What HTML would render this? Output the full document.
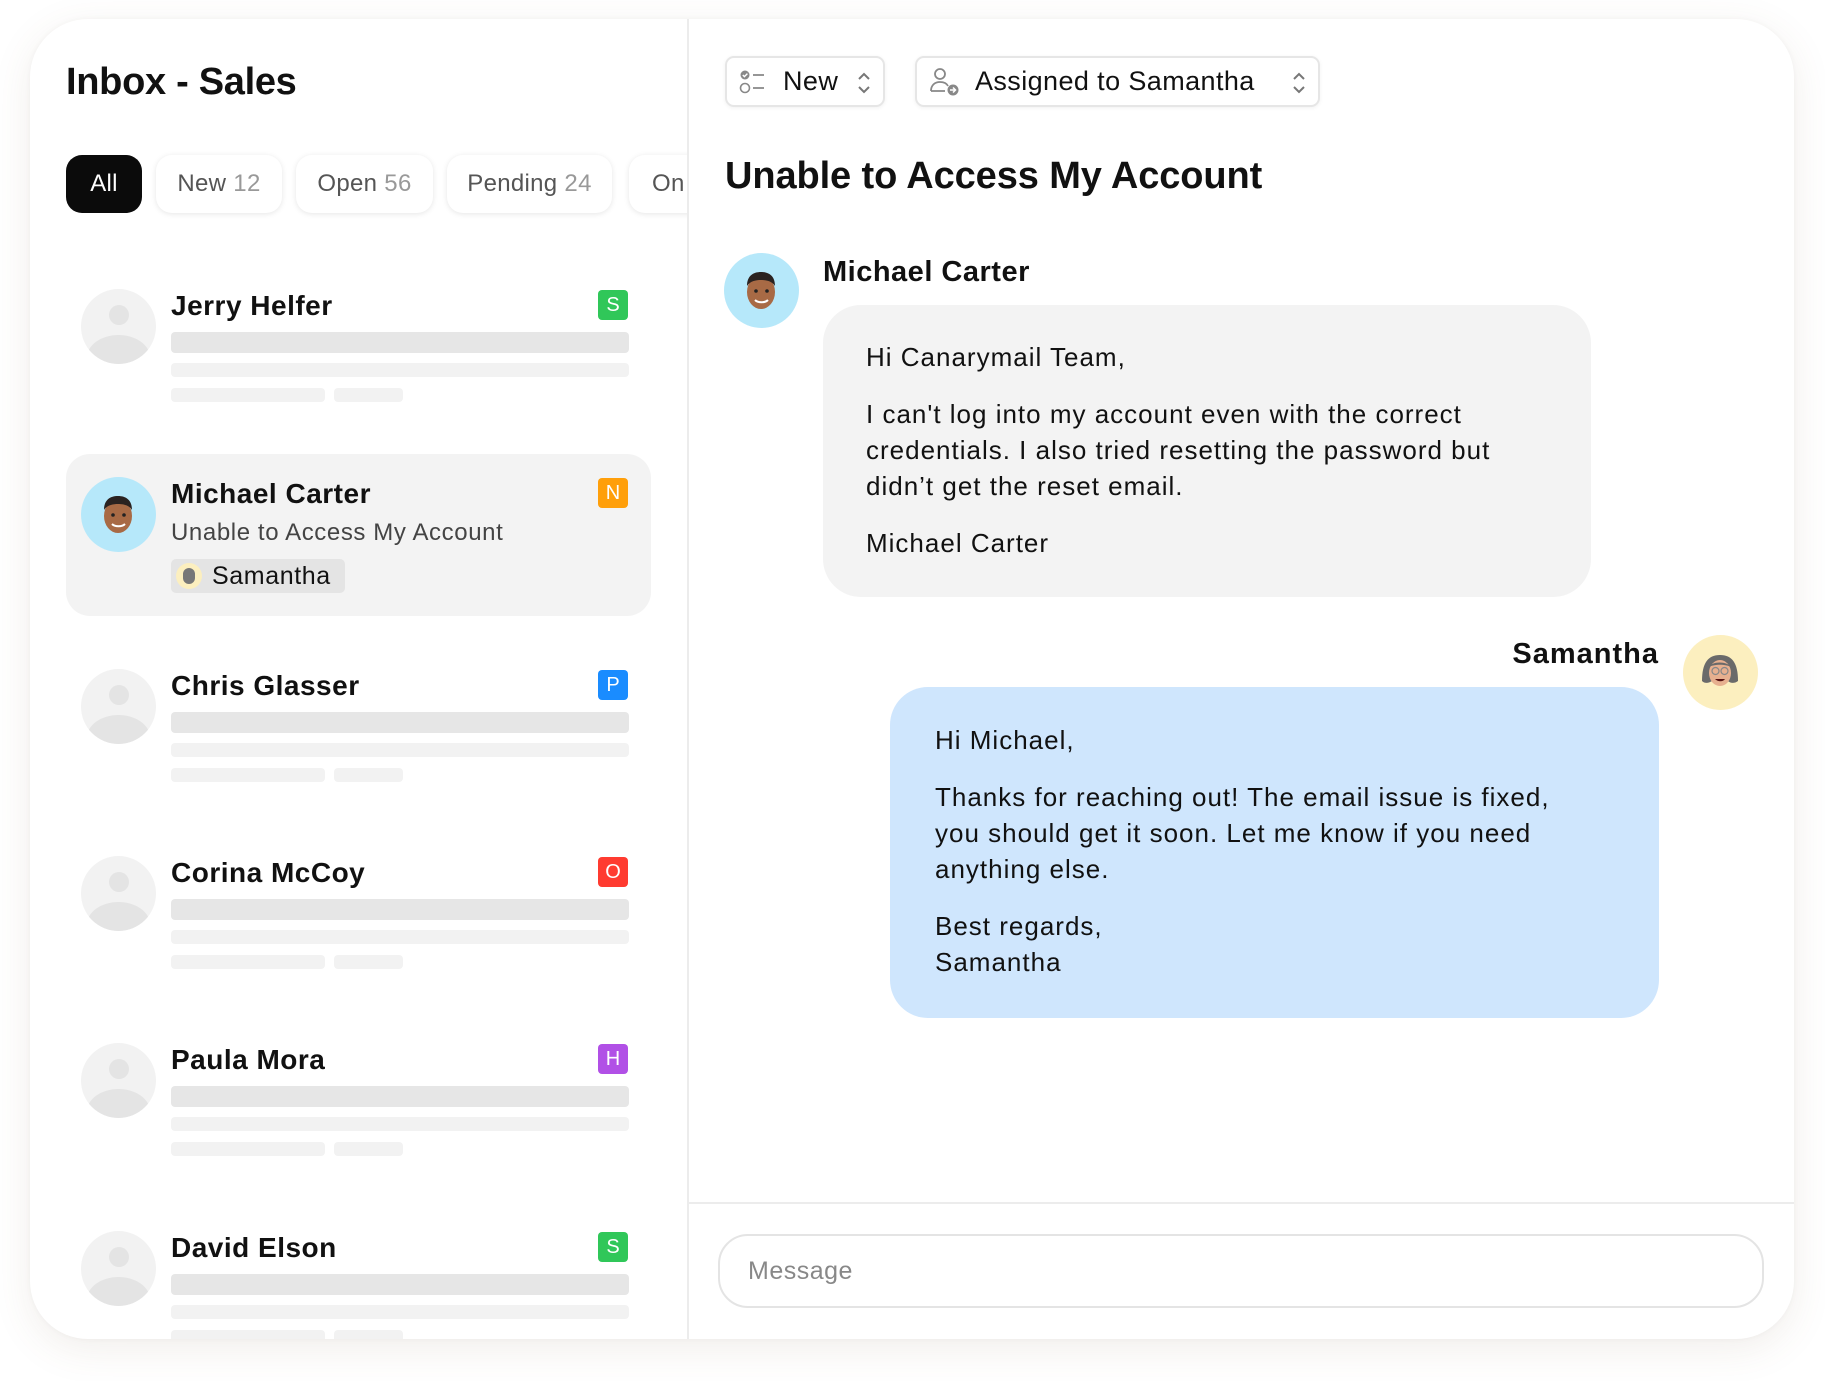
<!DOCTYPE html>
<html><head><meta charset="utf-8"><style>
*{box-sizing:border-box;margin:0;padding:0}
body{width:1825px;height:1381px;background:#fff;font-family:"Liberation Sans",sans-serif;color:#111;position:relative;overflow:hidden}
.card{position:absolute;left:30px;top:19px;width:1764px;height:1320px;border-radius:58px;background:#fff;box-shadow:0 10px 40px rgba(120,90,60,.10),0 0 6px rgba(0,0,0,.04);overflow:hidden}
.abs{position:absolute}
.left{position:absolute;left:0;top:0;width:657px;height:1320px;overflow:hidden}
.title{left:36px;top:42px;font-size:38px;font-weight:bold;letter-spacing:-.3px}
.tab{position:absolute;top:136px;height:58px;border-radius:16px;background:#fff;box-shadow:0 1px 6px rgba(0,0,0,.10);font-size:24px;color:#555;line-height:58px;text-align:center;letter-spacing:.3px}
.tab span{color:#999}
.divider{left:657px;top:0;width:2px;height:1320px;background:#ececec}
.av{position:absolute;width:75px;height:75px;border-radius:50%;background:#f2f2f2;overflow:hidden}
.av .h{position:absolute;left:28px;top:16px;width:20px;height:20px;border-radius:50%;background:#e4e4e4}
.av .b{position:absolute;left:6px;top:46px;width:63px;height:45px;border-radius:50%;background:#e4e4e4}
.name{position:absolute;font-size:28px;font-weight:bold;letter-spacing:.5px}
.badge{position:absolute;width:30px;height:30px;border-radius:4px;color:#fff;font-size:20px;text-align:center;line-height:30px}
.sk{position:absolute;border-radius:4px}
.dd{position:absolute;top:37px;height:51px;border:2px solid #e6e6e6;border-radius:9px;box-shadow:0 1px 4px rgba(0,0,0,.06);font-size:27px;line-height:47px;letter-spacing:.4px}
.bub{position:absolute;border-radius:38px;font-size:26px;line-height:36px;color:#111;letter-spacing:1px}
.bub p{margin-bottom:21px}
</style></head><body>
<div class="card">
<div class="left">
<div class="abs title">Inbox - Sales</div>
<div class="tab" style="left:36px;width:76px;background:#0b0b0b;color:#fff;box-shadow:none">All</div>
<div class="tab" style="left:126px;width:126px">New <span>12</span></div>
<div class="tab" style="left:266px;width:137px">Open <span>56</span></div>
<div class="tab" style="left:417px;width:165px">Pending <span>24</span></div>
<div class="tab" style="left:599px;width:100px;text-align:left;padding-left:23px">On</div>
<div class="abs" style="left:36px;top:435px;width:585px;height:162px;border-radius:24px;background:#f3f3f3"></div>
<div id="list"></div>
</div>
<div class="abs divider"></div>

<div class="dd" style="left:695px;width:160px">
<svg class="abs" style="left:12px;top:11px" width="30" height="26" viewBox="0 0 30 26"><circle cx="6" cy="6" r="4.5" fill="#888"/><path d="M3.8 6l1.6 1.6 3-3" stroke="#fff" stroke-width="1.4" fill="none"/><circle cx="6" cy="19" r="4.5" fill="none" stroke="#888" stroke-width="1.6"/><path d="M14 6h11M14 19h11" stroke="#888" stroke-width="1.8"/></svg>
<span class="abs" style="left:56px;top:0">New</span>
<svg class="abs" style="left:130px;top:12px" width="14" height="26" viewBox="0 0 14 26"><path d="M2 9l5-5 5 5M2 17l5 5 5-5" stroke="#777" stroke-width="2" fill="none"/></svg>
</div>
<div class="dd" style="left:885px;width:405px">
<svg class="abs" style="left:12px;top:9px" width="32" height="30" viewBox="0 0 32 30"><circle cx="11" cy="7" r="5" fill="none" stroke="#888" stroke-width="1.8"/><path d="M2 24c0-6 4-9 9-9s7 2 8 4M2 24h14" stroke="#888" stroke-width="1.8" fill="none"/><circle cx="24" cy="23" r="5.5" fill="#888"/><path d="M21 23h5M24 20.5l2.5 2.5-2.5 2.5" stroke="#fff" stroke-width="1.5" fill="none"/></svg>
<span class="abs" style="left:58px;top:0">Assigned to Samantha</span>
<svg class="abs" style="left:375px;top:12px" width="14" height="26" viewBox="0 0 14 26"><path d="M2 9l5-5 5 5M2 17l5 5 5-5" stroke="#777" stroke-width="2" fill="none"/></svg>
</div>

<div class="abs" style="left:695px;top:136px;font-size:38px;font-weight:bold;letter-spacing:-.1px">Unable to Access My Account</div>

<div class="abs" style="left:694px;top:234px;width:75px;height:75px;border-radius:50%;background:#b6e8fa">
<svg width="75" height="75" viewBox="0 0 75 75"><ellipse cx="37" cy="39" rx="14" ry="17" fill="#a86a45"/><path d="M23 33c0-10 6-14 14-14s14 4 14 14c-3-5-9-6-14-6s-11 1-14 6z" fill="#2a2220"/><circle cx="32" cy="38" r="1.8" fill="#222"/><circle cx="43" cy="38" r="1.8" fill="#222"/><path d="M31 47c3 3 10 3 13 0" stroke="#fff" stroke-width="2" fill="none"/></svg>
</div>
<div class="name" style="left:793px;top:237px;font-size:29px">Michael Carter</div>
<div class="bub" style="left:793px;top:286px;width:768px;height:292px;background:#f3f3f3;padding:34px 70px 34px 43px">
<p>Hi Canarymail Team,</p>
<p>I can't log into my account even with the correct credentials. I also tried resetting the password but didn’t get the reset email.</p>
<p>Michael Carter</p>
</div>

<div class="name" style="right:135px;top:619px;font-size:29px;letter-spacing:1px">Samantha</div>
<div class="abs" style="left:1653px;top:616px;width:75px;height:75px;border-radius:50%;background:#fcefbf">
<svg width="75" height="75" viewBox="0 0 75 75"><path d="M19 46c0-18 6-26 18-26s18 8 18 26c-4 3-8 2-10 0h-16c-3 2-7 3-10 0z" fill="#6a6a6a"/><ellipse cx="37" cy="38" rx="11" ry="13" fill="#e7b08f"/><path d="M26 32c3-6 18-6 22 0-5-3-17-3-22 0z" fill="#6a6a6a"/><circle cx="32.5" cy="36" r="3.5" fill="none" stroke="#888" stroke-width="1.2"/><circle cx="41.5" cy="36" r="3.5" fill="none" stroke="#888" stroke-width="1.2"/><path d="M32 44c3 3 8 3 10 0z" fill="#511"/></svg>
</div>
<div class="bub" style="left:860px;top:668px;width:769px;height:331px;background:#cfe6fd;padding:35px 100px 35px 45px">
<p>Hi Michael,</p>
<p>Thanks for reaching out! The email issue is fixed, you should get it soon. Let me know if you need anything else.</p>
<p style="margin:0">Best regards,<br>Samantha</p>
</div>

<div class="abs" style="left:659px;top:1183px;width:1105px;height:2px;background:#ececec"></div>
<div class="abs" style="left:688px;top:1215px;width:1046px;height:74px;border:2px solid #e4e4e4;border-radius:30px;font-size:25px;color:#888;line-height:70px;padding-left:28px;letter-spacing:.5px">Message</div>
</div>

<script>
var items=[["Jerry Helfer","S","#30c759",306],["Chris Glasser","P","#1a8cff",686],["Corina McCoy","O","#ff3b30",873],["Paula Mora","H","#b150e6",1060],["David Elson","S","#30c759",1248]];
var h="";
items.forEach(function(it){var y=it[3]-19;
h+='<div class="av" style="left:51px;top:'+(y-17)+'px"><div class="h"></div><div class="b"></div></div>';
h+='<div class="name" style="left:141px;top:'+(y-16)+'px">'+it[0]+'</div>';
h+='<div class="badge" style="left:568px;top:'+(y-16)+'px;background:'+it[2]+'">'+it[1]+'</div>';
h+='<div class="sk" style="left:141px;top:'+(y+26)+'px;width:458px;height:21px;background:#e6e6e6"></div>';
h+='<div class="sk" style="left:141px;top:'+(y+57)+'px;width:458px;height:14px;background:#f2f2f2"></div>';
h+='<div class="sk" style="left:141px;top:'+(y+82)+'px;width:154px;height:14px;background:#f2f2f2"></div>';
h+='<div class="sk" style="left:304px;top:'+(y+82)+'px;width:69px;height:14px;background:#f2f2f2"></div>';
});
var y=494-19;
h+='<div class="av" style="left:51px;top:'+(y-17)+'px;background:#b6e8fa"><svg width="75" height="75" viewBox="0 0 75 75"><ellipse cx="37" cy="39" rx="14" ry="17" fill="#a86a45"/><path d="M23 33c0-10 6-14 14-14s14 4 14 14c-3-5-9-6-14-6s-11 1-14 6z" fill="#2a2220"/><circle cx="32" cy="38" r="1.8" fill="#222"/><circle cx="43" cy="38" r="1.8" fill="#222"/><path d="M31 47c3 3 10 3 13 0" stroke="#fff" stroke-width="2" fill="none"/></svg></div>';
h+='<div class="name" style="left:141px;top:'+(y-16)+'px">Michael Carter</div>';
h+='<div class="badge" style="left:568px;top:'+(y-16)+'px;background:#ff9f0a">N</div>';
h+='<div class="abs" style="left:141px;top:'+(y+25)+'px;font-size:24px;color:#444;letter-spacing:.6px">Unable to Access My Account</div>';
h+='<div class="abs" style="left:141px;top:'+(y+65)+'px;width:174px;height:34px;border-radius:5px;background:#e4e4e4;font-size:25px;line-height:34px;padding-left:41px;letter-spacing:.6px">Samantha<div class="abs" style="left:5px;top:4px;width:26px;height:26px;border-radius:50%;background:#fcefbf"><div class="abs" style="left:7px;top:5px;width:12px;height:16px;border-radius:6px;background:#777"></div></div></div>';
document.getElementById("list").innerHTML=h;
</script>
</body></html>
